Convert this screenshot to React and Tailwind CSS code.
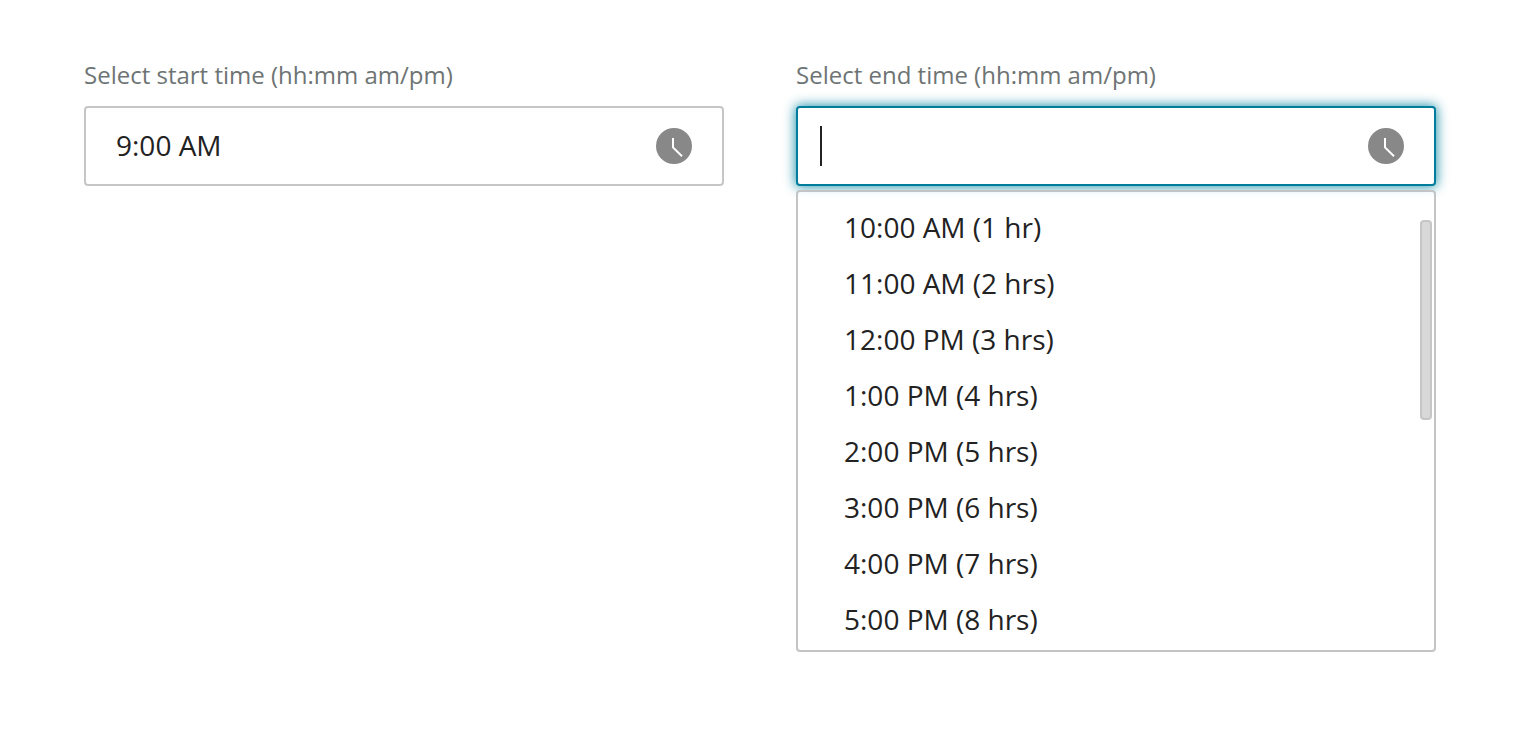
const END_TIMES = [
  '10:00 AM (1 hr)',
  '11:00 AM (2 hrs)',
  '12:00 PM (3 hrs)',
  '1:00 PM (4 hrs)',
  '2:00 PM (5 hrs)',
  '3:00 PM (6 hrs)',
  '4:00 PM (7 hrs)',
  '5:00 PM (8 hrs)',
];

function ClockIcon() {
  return (
    <svg className="size-9" viewBox="0 0 36 36" fill="none" aria-hidden="true">
      <circle cx="18" cy="18" r="18" fill="#888888" />
      <path d="M17 10v9.4l9 8.8" stroke="#ffffff" strokeWidth="2" />
    </svg>
  );
}

function TimeField({ id, label, value, active = false, listId }) {
  return (
    <div className="flex flex-col gap-4">
      <label htmlFor={id} className="text-2xl leading-[30px] text-[#6e7474]">
        {label}
      </label>
      <div
        className={
          active
            ? 'flex h-20 items-center rounded border-2 border-[#007c9d] bg-white pr-[30px] pl-[22px] shadow-[0_0_12px_1px_rgba(0,132,160,0.85)]'
            : 'flex h-20 items-center rounded border-2 border-[#c6c6c6] bg-white pr-[30px] pl-[22px]'
        }
      >
        <span className={active ? 'h-10 w-0.5 bg-[#222222]' : 'h-10 w-0.5'} />
        <input
          id={id}
          type="text"
          defaultValue={value}
          role={active ? 'combobox' : undefined}
          aria-expanded={active ? true : undefined}
          aria-controls={listId}
          className="h-full min-w-0 flex-1 bg-transparent px-1.5 pb-0.5 text-[28px] text-[#222222] caret-transparent outline-none"
        />
        <button type="button" aria-label={`Open list: ${label}`} className="shrink-0">
          <ClockIcon />
        </button>
      </div>
    </div>
  );
}

export default function App() {
  return (
    <main className="grid min-h-screen grid-cols-2 items-start gap-[72px] bg-white px-[84px] pt-[60px] font-['Open_Sans',sans-serif]">
      <TimeField id="start-time" label="Select start time (hh:mm am/pm)" value="9:00 AM" />
      <div className="flex flex-col gap-1">
        <TimeField
          id="end-time"
          label="Select end time (hh:mm am/pm)"
          value=""
          active
          listId="end-time-options"
        />
        <div className="relative rounded border-2 border-[#c2c4c5] bg-white/70 pt-2 pb-0.5">
          <ul id="end-time-options" role="listbox" aria-label="End time">
            {END_TIMES.map((time) => (
              <li
                key={time}
                role="option"
                aria-selected={false}
                className="flex h-14 items-center px-[46px] pb-0.5 text-[28px] text-[#222222]"
              >
                {time}
              </li>
            ))}
          </ul>
          <div className="absolute top-7 right-0.5 h-[200px] w-3 rounded border-2 border-[#c6c6c6] bg-[#d8d8d8]" />
        </div>
      </div>
    </main>
  );
}
